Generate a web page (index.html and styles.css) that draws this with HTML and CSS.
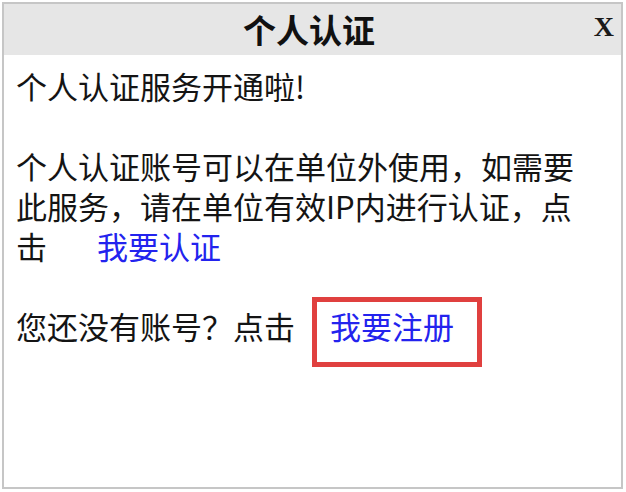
FILE: index.html
```html
<!DOCTYPE html>
<html lang="zh-CN">
<head>
<meta charset="utf-8">
<title>个人认证</title>
<link rel="stylesheet" href="styles.css">
</head>
<body>
<div class="window">
  <div class="titlebar">
    <span class="spacer"></span>
    <h1 class="title">个人认证</h1>
    <span class="close">X</span>
  </div>
  <div class="content">
    <p class="para">个人认证服务开通啦!</p>
    <p class="para">个人认证账号可以在单位外使用，如需要此服务，请在单位有效IP内进行认证，点击<a class="link link-auth" href="#">我要认证</a></p>
    <p class="para">您还没有账号？点击<a class="link link-reg" href="#">我要注册</a></p>
  </div>
</div>
</body>
</html>
```

FILE: styles.css
```css
html, body {
  margin: 0;
  padding: 0;
  background: #ffffff;
}

body {
  font-family: "Noto Sans CJK SC", "Noto Sans", sans-serif;
  color: #141414;
}

.window {
  box-sizing: border-box;
  margin: 2px 3px 3px 2px;
  height: 487px;
  border: 2px solid #c6c6c6;
  background: #ffffff;
  display: flex;
  flex-direction: column;
}

.titlebar {
  height: 51px;
  background: #e6e6e6;
  display: grid;
  grid-template-columns: 1fr auto 1fr;
  align-items: center;
  padding-right: 7px;
}

.title {
  margin: 0;
  font-size: 33px;
  font-weight: 700;
  line-height: 51px;
  color: #111111;
}

.close {
  justify-self: end;
  font-family: "Liberation Serif", serif;
  font-weight: 700;
  font-size: 28px;
  line-height: 1;
  color: #1a1a1a;
  margin-top: -6px;
}

.content {
  padding: 11px 30px 0 12px;
  font-size: 31px;
  line-height: 40px;
}

.para {
  margin: 0 0 40px;
}

.link {
  color: #2323ee;
  text-decoration: none;
  display: inline-block;
}

.link-auth {
  margin-left: 50px;
}

.link-reg {
  margin-left: 35px;
  position: relative;
}

.link-reg::after {
  content: "";
  position: absolute;
  top: -9px;
  bottom: -21px;
  left: -18px;
  right: -28px;
  border: 5px solid #e0403f;
}
```
